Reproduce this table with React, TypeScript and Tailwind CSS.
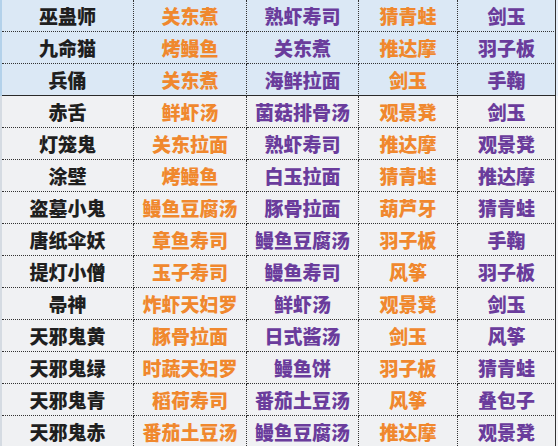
import React from "react";

const rows: string[][] = [
  ["巫蛊师", "关东煮", "熟虾寿司", "猜青蛙", "剑玉"],
  ["九命猫", "烤鳗鱼", "关东煮", "推达摩", "羽子板"],
  ["兵俑", "关东煮", "海鲜拉面", "剑玉", "手鞠"],
  ["赤舌", "鲜虾汤", "菌菇排骨汤", "观景凳", "剑玉"],
  ["灯笼鬼", "关东拉面", "熟虾寿司", "推达摩", "观景凳"],
  ["涂壁", "烤鳗鱼", "白玉拉面", "猜青蛙", "推达摩"],
  ["盗墓小鬼", "鳗鱼豆腐汤", "豚骨拉面", "葫芦牙", "猜青蛙"],
  ["唐纸伞妖", "章鱼寿司", "鳗鱼豆腐汤", "羽子板", "手鞠"],
  ["提灯小僧", "玉子寿司", "鳗鱼寿司", "风筝", "羽子板"],
  ["帚神", "炸虾天妇罗", "鲜虾汤", "观景凳", "剑玉"],
  ["天邪鬼黄", "豚骨拉面", "日式酱汤", "剑玉", "风筝"],
  ["天邪鬼绿", "时蔬天妇罗", "鳗鱼饼", "羽子板", "猜青蛙"],
  ["天邪鬼青", "稻荷寿司", "番茄土豆汤", "风筝", "叠包子"],
  ["天邪鬼赤", "番茄土豆汤", "鳗鱼豆腐汤", "推达摩", "观景凳"],
];

const widths = ["w-[132px]", "w-[113px]", "w-[112px]", "w-[99px]", "w-[98px]"];
const colors = ["text-[#1f1f1f]", "text-[#f0882e]", "text-[#6a3c9c]", "text-[#f0882e]", "text-[#6a3c9c]"];

export default function App() {
  return (
    <div
      className="w-[558px] h-[446px] overflow-hidden bg-[#f0f1f3]"
      style={{ fontFamily: '"Noto Sans CJK SC", "Noto Sans", sans-serif' }}
    >
      {rows.map((r, i) => {
        const top = i < 3;
        const bottomBorder =
          i === 2 ? "border-b border-solid border-[#2a2a2a]" : "border-b border-dotted border-[#333]";
        return (
          <div key={i} className={`flex h-[32px] ${top ? "bg-[#dbe8f5]" : "bg-[#f0f1f3]"}`}>
            <div className={`w-[2px] shrink-0 ${top ? "bg-[#b3d1ea]" : "bg-[#d5dbe2]"}`} />
            {r.map((t, j) => (
              <div
                key={j}
                className={`${widths[j]} shrink-0 flex items-center justify-center ${bottomBorder} border-r border-r-[#333]`}
                style={{ borderRightStyle: j === 4 ? "solid" : "dotted" }}
              >
                <span className={`text-[19px] font-black leading-none ${colors[j]}`}>{t}</span>
              </div>
            ))}
            <div className={`w-[3px] shrink-0 ${top ? "bg-[#e6eef7]" : "bg-[#f3f4f6]"}`} />
          </div>
        );
      })}
    </div>
  );
}
